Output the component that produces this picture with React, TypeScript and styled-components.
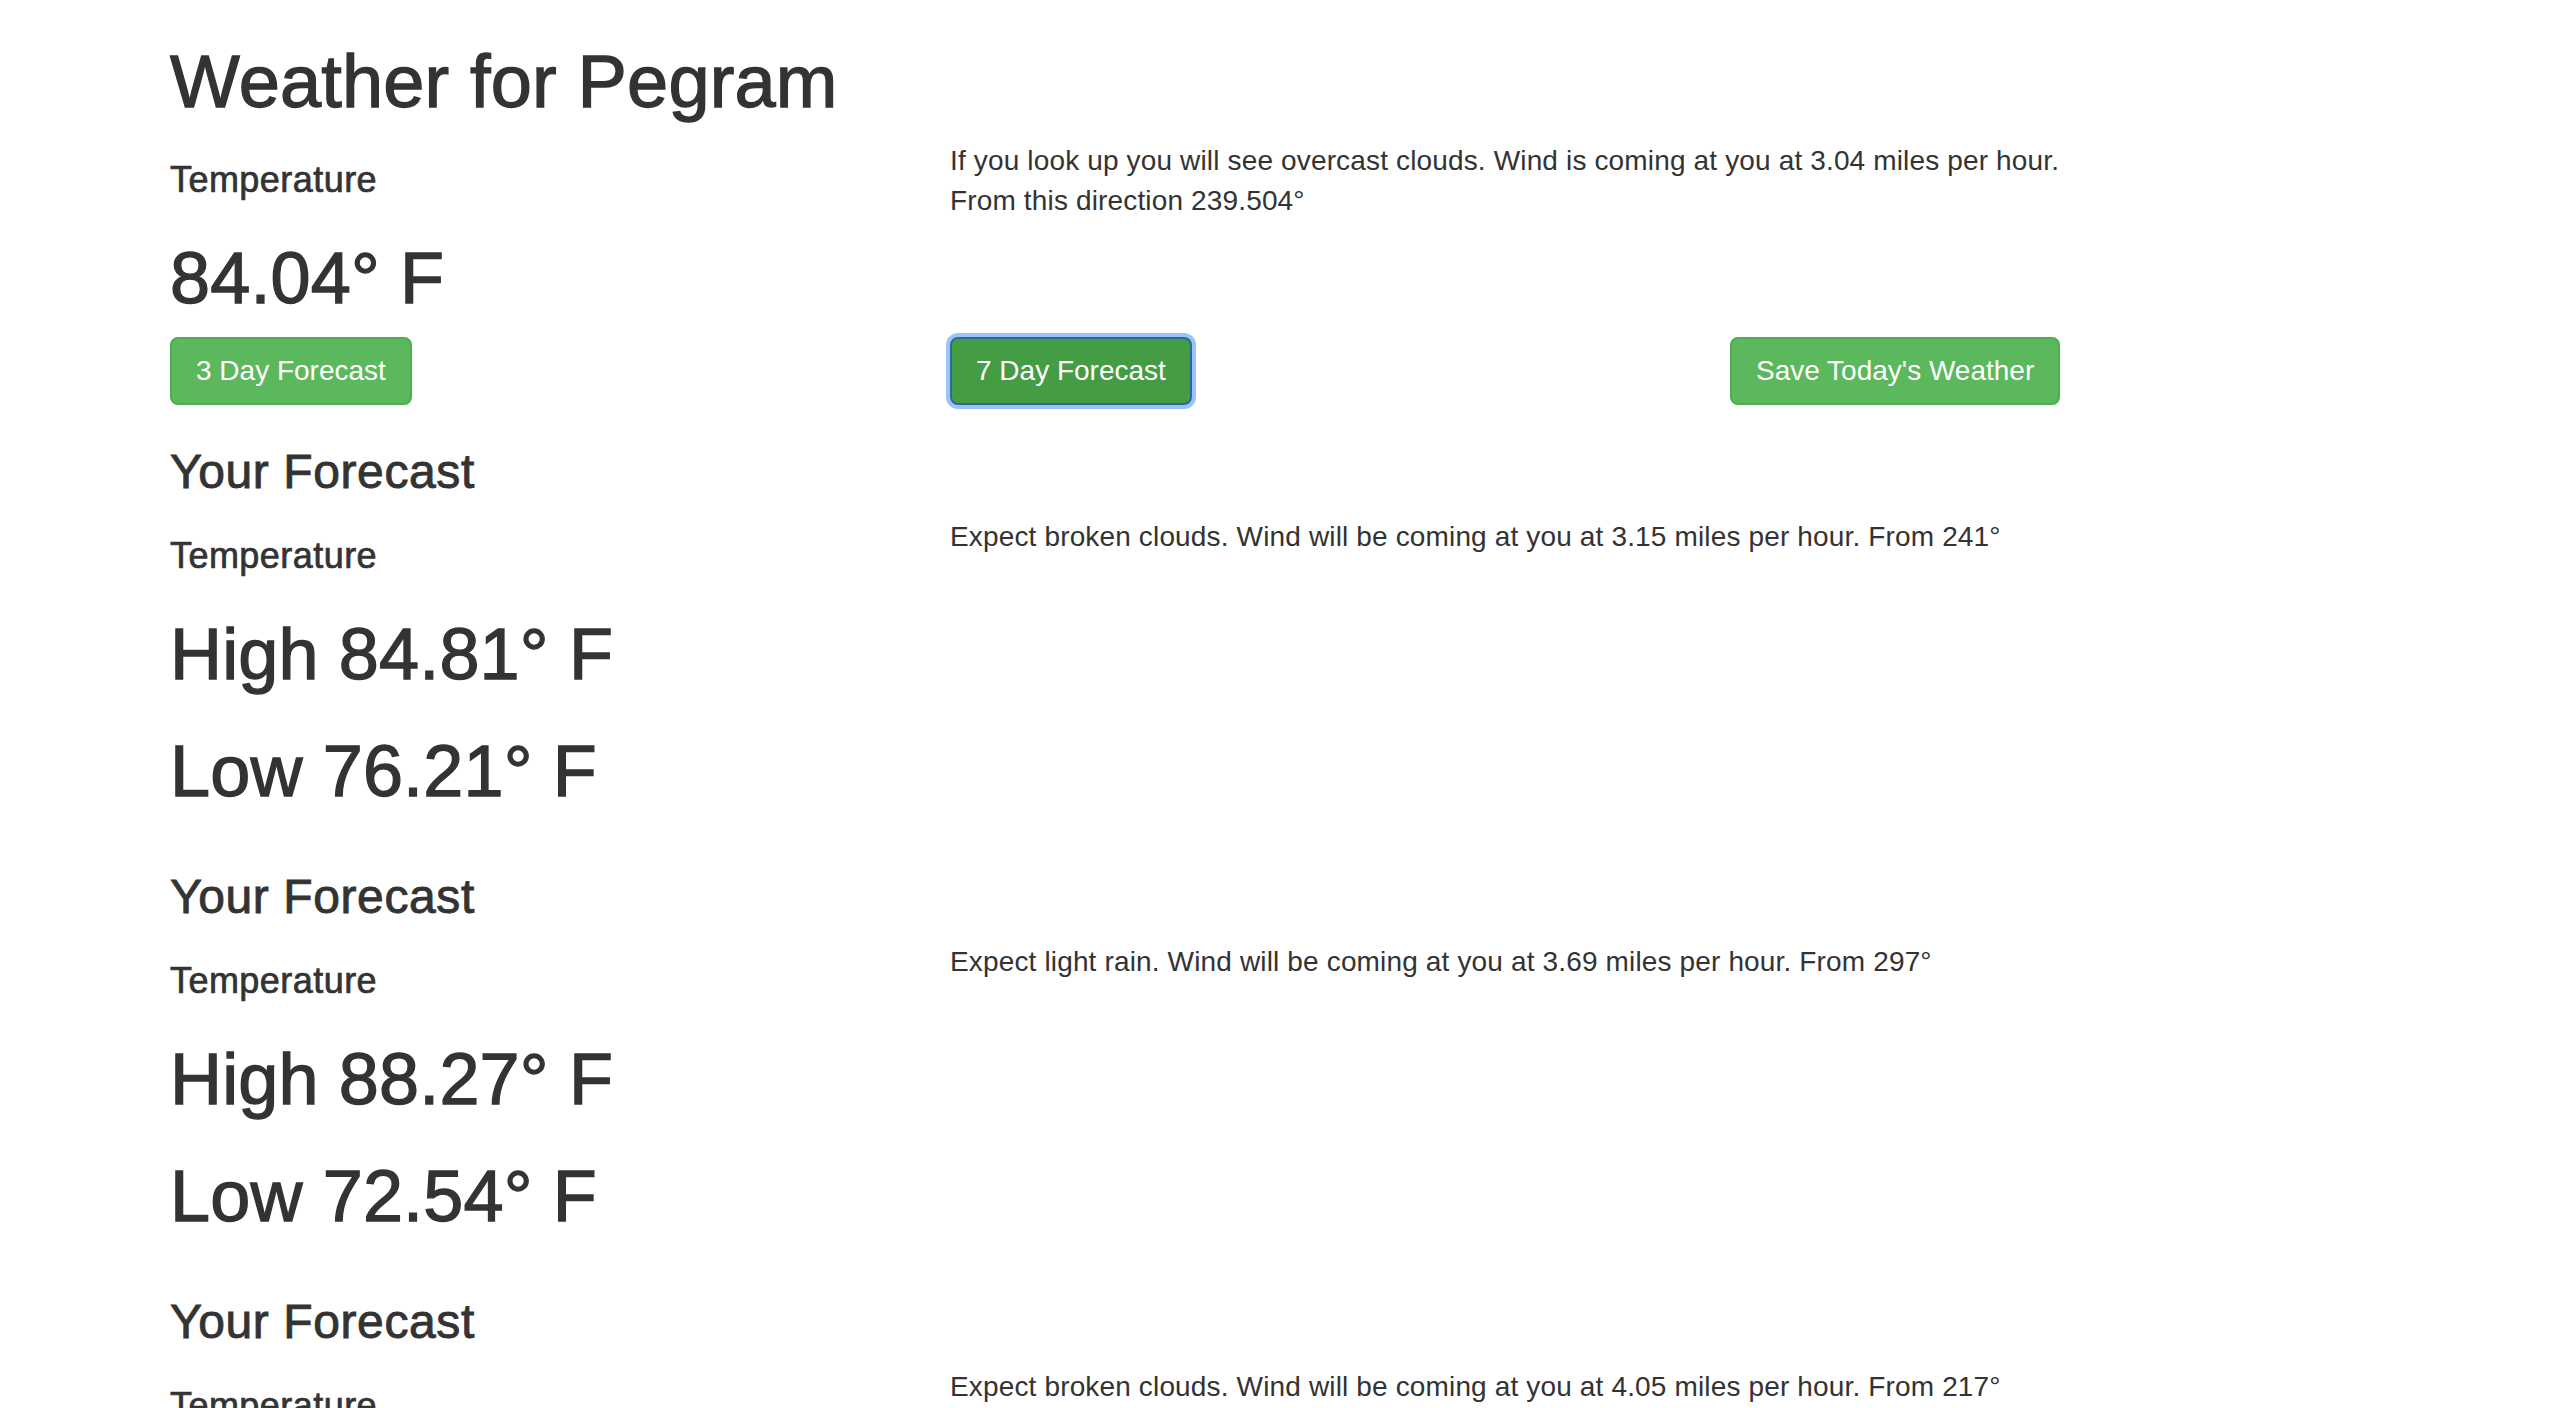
import React, { FC } from "react"
import styled, { createGlobalStyle } from "styled-components"

type Forecast = {
  high: string
  low: string
  text: string
}

const today = {
  city: "Pegram",
  temp: "84.04",
  text: "If you look up you will see overcast clouds. Wind is coming at you at 3.04 miles per hour. From this direction 239.504°",
}

const forecasts: Forecast[] = [
  {
    high: "84.81",
    low: "76.21",
    text: "Expect broken clouds. Wind will be coming at you at 3.15 miles per hour. From 241°",
  },
  {
    high: "88.27",
    low: "72.54",
    text: "Expect light rain. Wind will be coming at you at 3.69 miles per hour. From 297°",
  },
  {
    high: "86.40",
    low: "73.12",
    text: "Expect broken clouds. Wind will be coming at you at 4.05 miles per hour. From 217°",
  },
]

const App: FC = () => {
  return (
    <>
      <GlobalStyle />
      <Container>
        <Row>
          <Col span={12}>
            <Title>Weather for {today.city}</Title>
          </Col>
        </Row>
        <Row>
          <Col span={4}>
            <Label>Temperature</Label>
            <Big>{today.temp}° F</Big>
          </Col>
          <Col span={6}>
            <Text>{today.text}</Text>
          </Col>
        </Row>
        <Row>
          <Col span={4}>
            <Button>3 Day Forecast</Button>
          </Col>
          <Col span={4}>
            <Button active>7 Day Forecast</Button>
          </Col>
          <Col span={4}>
            <Button>Save Today's Weather</Button>
          </Col>
        </Row>

        {forecasts.map((day, i) => (
          <React.Fragment key={i}>
            <Row>
              <Col span={12}>
                <SubTitle>Your Forecast</SubTitle>
              </Col>
            </Row>
            <Row>
              <Col span={4}>
                <Label>Temperature</Label>
                <Big>High {day.high}° F</Big>
                <Big>Low {day.low}° F</Big>
              </Col>
              <Col span={6}>
                <Text>{day.text}</Text>
              </Col>
            </Row>
          </React.Fragment>
        ))}
      </Container>
    </>
  )
}

export default App

const GlobalStyle = createGlobalStyle`
  body {
    margin: 0;
    background: #fff;
    color: #333;
    font-family: "Liberation Sans", Arial, sans-serif;
    font-size: 28px;
    line-height: 40px;
    letter-spacing: 0.15px;
  }
`

const Container = styled.div`
  width: 2340px;
  margin-left: 140px;
`

const Row = styled.div`
  display: flex;
`

const Col = styled.div<{ span: number }>`
  flex: 0 0 ${(p) => (p.span / 12) * 100}%;
  box-sizing: border-box;
  padding: 0 30px;
`

const Title = styled.h1`
  margin: 42px 0 20px;
  font-size: 74px;
  font-weight: 500;
  line-height: 79px;
  -webkit-text-stroke: 1.3px #333;
`

const Big = styled.h1`
  margin: 40px 0 20px;
  font-size: 72px;
  font-weight: 500;
  line-height: 1.065;
  -webkit-text-stroke: 1.3px #333;
`

const SubTitle = styled.h3`
  margin: 41px 0 20px;
  font-size: 48px;
  font-weight: 500;
  line-height: 1.08;
  letter-spacing: 0.6px;
  -webkit-text-stroke: 0.9px #333;
`

const Label = styled.h4`
  margin: 20px 0;
  font-size: 36px;
  font-weight: 500;
  line-height: 1.08;
  letter-spacing: 0.45px;
  -webkit-text-stroke: 0.7px #333;
`

const Text = styled.p`
  margin: 0 0 20px;
`

const Button = styled.button<{ active?: boolean }>`
  display: inline-block;
  padding: 12px 24px;
  border: 2px solid ${(p) => (p.active ? "#2d6a93" : "#4cae4c")};
  border-radius: 8px;
  background: ${(p) => (p.active ? "#449d44" : "#5cb85c")};
  color: #fff;
  font-family: inherit;
  font-size: 28px;
  line-height: 40px;
  cursor: pointer;
  box-shadow: ${(p) => (p.active ? "0 0 0 4px rgba(120, 175, 245, 0.75)" : "none")};
`
